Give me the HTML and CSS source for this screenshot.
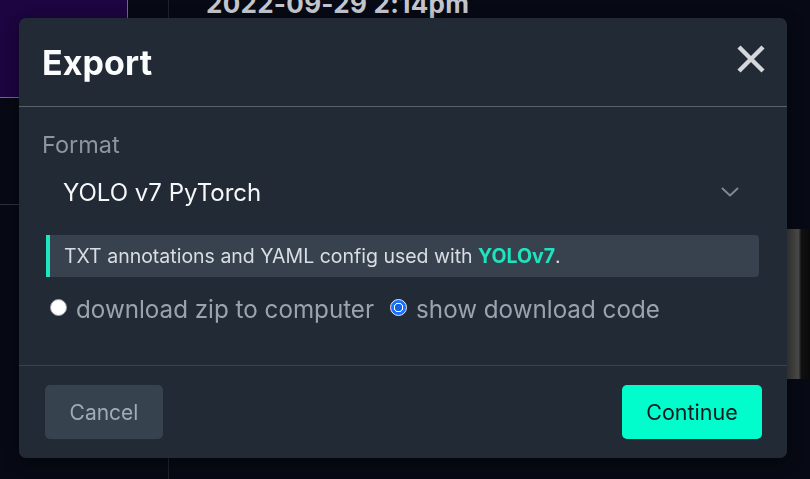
FILE: index.html
```html
<!DOCTYPE html>
<html lang="en">
<head>
<meta charset="utf-8">
<title>Export</title>
<link rel="stylesheet" href="styles.css">
</head>
<body>
<div class="app">
  <aside class="sidebar">
    <div class="project-card"></div>
    <div class="side-rule"></div>
  </aside>
  <main class="main">
    <h1 class="date">2022-09-29 2:14pm</h1>
    <div class="thumb"></div>
  </main>
</div>

<div class="overlay">
  <section class="modal" role="dialog" aria-labelledby="export-title">
    <header class="modal-header">
      <h2 id="export-title" class="modal-title">Export</h2>
      <button class="close-btn" aria-label="Close">
        <svg width="30" height="28" viewBox="0 0 30 28" aria-hidden="true">
          <path d="M3 2 L27 26 M27 2 L3 26" stroke="#d4d8dc" stroke-width="4.4" fill="none"/>
        </svg>
      </button>
    </header>

    <div class="modal-body">
      <div class="field-label">Format</div>
      <div class="select-box">
        <span class="select-value">YOLO v7 PyTorch</span>
        <svg class="chevron" width="18" height="10" viewBox="0 0 18 10" aria-hidden="true">
          <path d="M1.5 1.5 L9 8.5 L16.5 1.5" stroke="#7d8893" stroke-width="2" fill="none" stroke-linecap="round" stroke-linejoin="round"/>
        </svg>
      </div>
      <div class="info-box">
        <p>TXT annotations and YAML config used with <span class="accent">YOLOv7</span>.</p>
      </div>
      <div class="radio-row">
        <label class="radio-option">
          <span class="radio"></span>
          <span class="radio-label">download zip to computer</span>
        </label>
        <label class="radio-option">
          <span class="radio radio-checked"></span>
          <span class="radio-label">show download code</span>
        </label>
      </div>
    </div>

    <footer class="modal-footer">
      <button class="btn btn-cancel">Cancel</button>
      <button class="btn btn-continue">Continue</button>
    </footer>
  </section>
</div>
</body>
</html>
```

FILE: styles.css
```css
* {
  box-sizing: border-box;
}

html, body {
  margin: 0;
  padding: 0;
}

body {
  width: 810px;
  height: 479px;
  overflow: hidden;
  background: #070a14;
  font-family: Inter, "Noto Sans", "Liberation Sans", sans-serif;
  color: #fff;
}

/* ---------- background page ---------- */
.app {
  display: grid;
  grid-template-columns: 169px 1fr;
  height: 479px;
}

.sidebar {
  border-right: 1px solid #1d222b;
  display: flex;
  flex-direction: column;
}

.project-card {
  margin: -6px 0 0 -6px;
  width: 134px;
  height: 104px;
  background: #1c0540;
  border: 1px solid #7c5aa6;
  border-radius: 6px;
}

.side-rule {
  margin-top: 106px;
  height: 1px;
  background: #2b313b;
}

.main {
  display: flex;
  flex-direction: column;
  padding-left: 37px;
}

.date {
  margin: -9px 0 0 0;
  font-size: 26px;
  font-weight: 700;
  line-height: 1;
  color: #c3c6cd;
  letter-spacing: 0.3px;
}

.thumb {
  align-self: flex-end;
  margin-top: 212px;
  width: 23px;
  height: 150px;
  background: linear-gradient(90deg, #3b3b3b 0%, #4a4a48 50%, #111 62%, #0a0a0a 100%);
}

/* ---------- modal ---------- */
.overlay {
  position: fixed;
  inset: 0;
  padding: 18px 0 0 19px;
}

.modal {
  width: 768px;
  background: #212a35;
  border-radius: 7px;
  box-shadow: 0 4px 16px rgba(0, 0, 0, 0.4);
  display: flex;
  flex-direction: column;
}

.modal-header {
  height: 89px;
  display: flex;
  align-items: center;
  justify-content: space-between;
  padding: 0 21px 0 23px;
  border-bottom: 1px solid #58626d;
}

.modal-title {
  margin: 0;
  font-size: 34px;
  font-weight: 700;
  color: #fbfcfd;
  letter-spacing: 0.1px;
}

.close-btn {
  background: none;
  border: 0;
  padding: 0;
  margin-bottom: 7px;
  display: flex;
  cursor: pointer;
}

.modal-body {
  padding: 24px 28px 41px 23px;
  display: flex;
  flex-direction: column;
}

.field-label {
  font-size: 23.5px;
  line-height: 27px;
  color: #8c96a1;
}

.select-box {
  margin-top: 10px;
  height: 48px;
  display: flex;
  align-items: center;
  justify-content: space-between;
  padding: 0 20px 0 21px;
}

.select-value {
  font-size: 24px;
  color: #f6f7f8;
}

.info-box {
  margin: 19px 0 0 4px;
  height: 42px;
  display: flex;
  align-items: center;
  background: #38424f;
  border-left: 4px solid #1ee6c0;
  border-radius: 0 4px 4px 0;
  padding-left: 14px;
}

.info-box p {
  margin: 0;
  font-size: 19.5px;
  color: #d9dee3;
}

.accent {
  color: #1fe3bf;
  font-weight: 700;
}

.radio-row {
  margin-top: 17px;
  display: flex;
  align-items: center;
  gap: 16px;
  padding-left: 8px;
  height: 30px;
}

.radio-option {
  display: flex;
  align-items: center;
  gap: 9px;
}

.radio {
  width: 17px;
  height: 17px;
  border-radius: 50%;
  background: #ffffff;
  border: 1px solid #9aa1a8;
  margin-bottom: 4px;
}

.radio-checked {
  background: radial-gradient(circle, #1462e8 0 3.5px, #ffffff 4px 4.6px, #1a70ff 5px);
  border: 1.5px solid #e4ecfa;
}

.radio-label {
  font-size: 24.2px;
  color: #9aa4ae;
}

.modal-footer {
  border-top: 1px solid #39434e;
  padding: 19px 25px 19px 26px;
  display: flex;
  justify-content: space-between;
}

.btn {
  height: 54px;
  border: 0;
  border-radius: 5px;
  font-family: inherit;
  font-size: 21px;
  cursor: pointer;
}

.btn-cancel {
  width: 118px;
  background: #37424f;
  color: #a2abb5;
}

.btn-continue {
  width: 140px;
  background: #00fdcb;
  color: #0f1a1c;
  font-size: 21.5px;
}
```
